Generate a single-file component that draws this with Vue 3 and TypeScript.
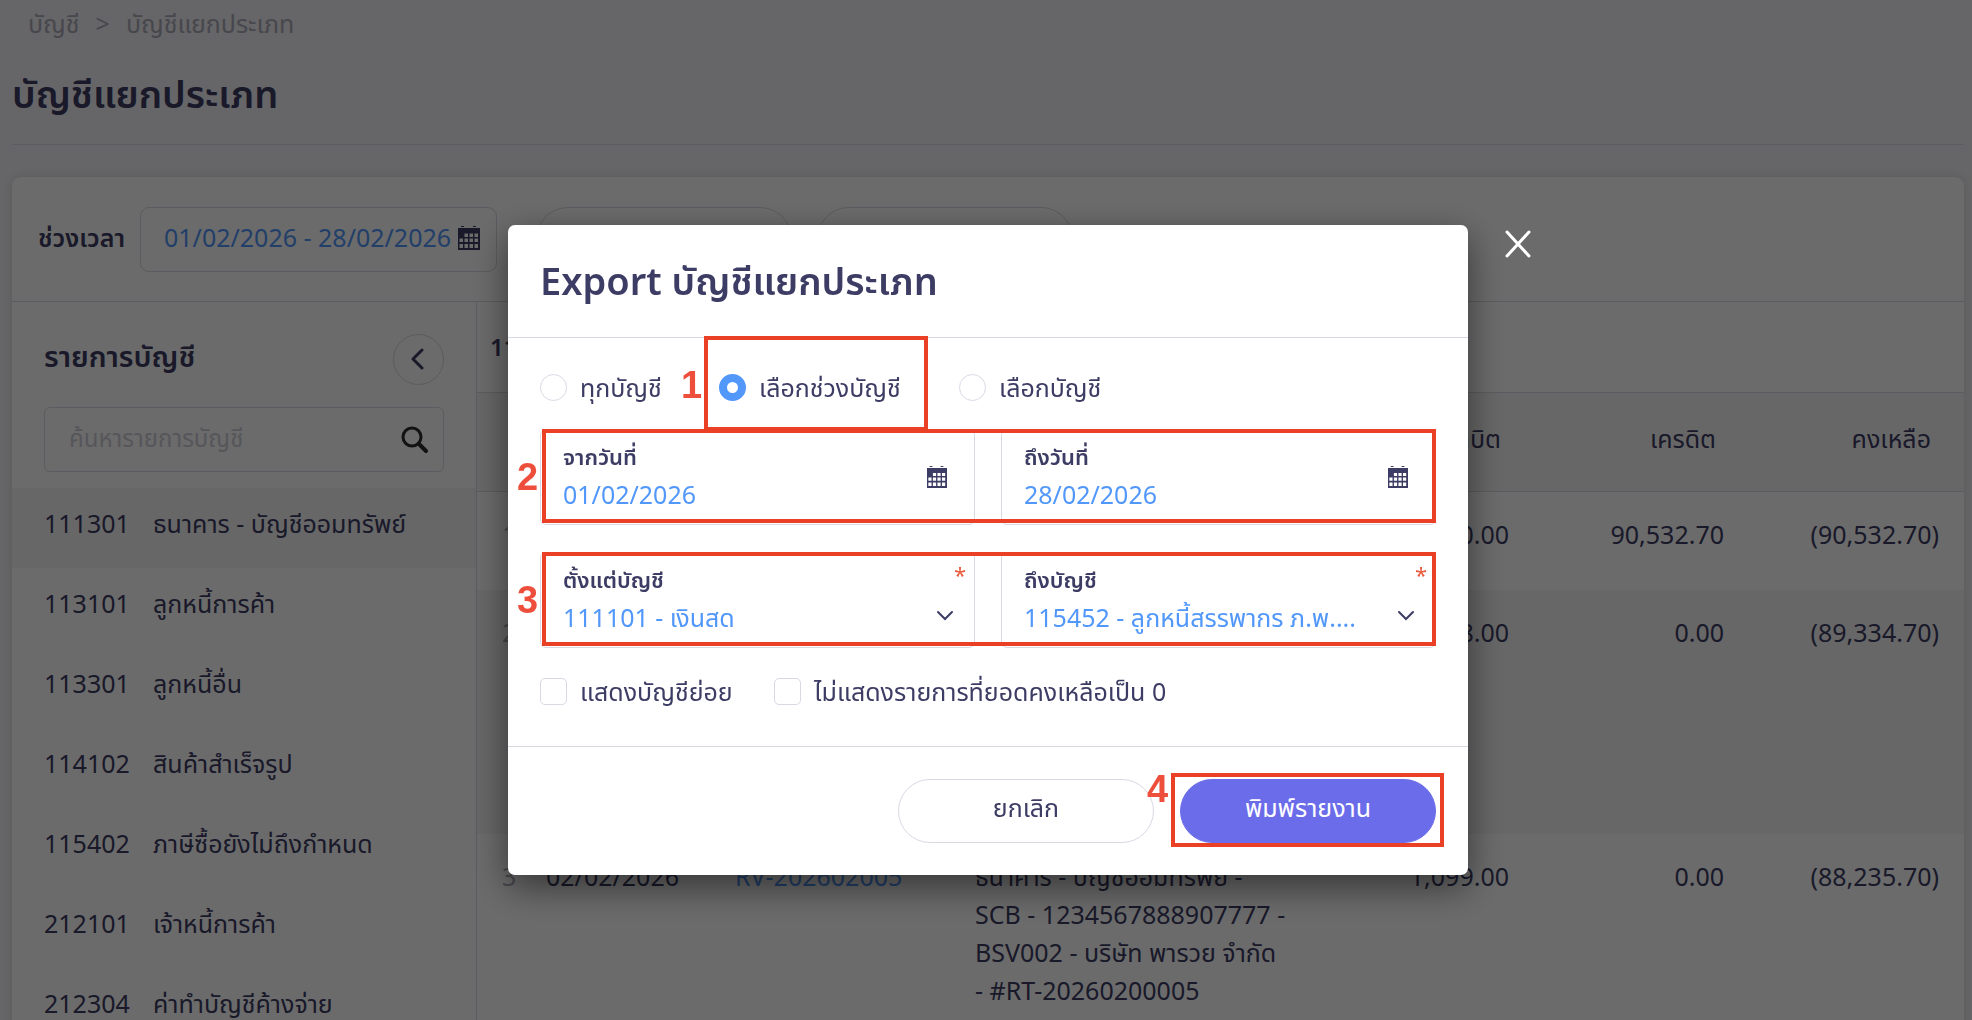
<script setup lang="ts">
import { ref } from 'vue'

interface Account { code: string; name: string }
interface Entry { no: string; date: string; doc: string; detail: string[]; debit: string; credit: string; balance: string }

const accounts: Account[] = [
  { code: '111301', name: 'ธนาคาร - บัญชีออมทรัพย์' },
  { code: '113101', name: 'ลูกหนี้การค้า' },
  { code: '113301', name: 'ลูกหนี้อื่น' },
  { code: '114102', name: 'สินค้าสำเร็จรูป' },
  { code: '115402', name: 'ภาษีซื้อยังไม่ถึงกำหนด' },
  { code: '212101', name: 'เจ้าหนี้การค้า' },
  { code: '212304', name: 'ค่าทำบัญชีค้างจ่าย' },
]

const entries: Entry[] = [
  { no: '1', date: '', doc: '', detail: [], debit: '0.00', credit: '90,532.70', balance: '(90,532.70)' },
  { no: '2', date: '', doc: '', detail: [], debit: '1,198.00', credit: '0.00', balance: '(89,334.70)' },
  {
    no: '3',
    date: '02/02/2026',
    doc: 'RV-202602005',
    detail: ['ธนาคาร - บัญชีออมทรัพย์ -', 'SCB - 1234567888907777 -', 'BSV002 - บริษัท พารวย จำกัด', '- #RT-20260200005'],
    debit: '1,099.00',
    credit: '0.00',
    balance: '(88,235.70)',
  },
]

const scope = ref('range')
const period = ref('01/02/2026 - 28/02/2026')
const dateFrom = ref('01/02/2026')
const dateTo = ref('28/02/2026')
const showSub = ref(false)
const hideZero = ref(false)
</script>

<template>
  <div class="page">
    <svg class="defs" aria-hidden="true">
      <symbol id="calendar" viewBox="0 0 22 24">
        <path fill="currentColor" fill-rule="evenodd" d="M3 0h3v1H3zM15 0h3v1h-3zM0 2h22v22H0zM6.5 7.5v3.5h3.5v-3.5zM11.5 7.5v3.5h3.5v-3.5zM16.5 7.5v3.5h3.5v-3.5zM1.5 12.5v3.5h3.5v-3.5zM6.5 12.5v3.5h3.5v-3.5zM11.5 12.5v3.5h3.5v-3.5zM16.5 12.5v3.5h3.5v-3.5zM1.5 18v4h3.5v-4zM6.5 18v4h3.5v-4zM11.5 18v4h3.5v-4zM16.5 18v4h3.5v-4z" />
      </symbol>
    </svg>

    <nav class="crumbs">
      <a href="#">บัญชี</a><span>&gt;</span><a href="#">บัญชีแยกประเภท</a>
    </nav>
    <h1 class="title">บัญชีแยกประเภท</h1>

    <section class="card">
      <div class="filters">
        <label class="strong" for="period">ช่วงเวลา</label>
        <div class="period">
          <input id="period" v-model="period" type="text" />
          <svg class="cal-lg"><use href="#calendar" /></svg>
        </div>
        <button class="pill" type="button" aria-label="Export"></button>
        <button class="pill" type="button" aria-label="Print"></button>
      </div>

      <div class="body">
        <aside class="side">
          <div class="side-head">
            <h2>รายการบัญชี</h2>
            <button class="collapse" type="button" aria-label="ย่อ">
              <svg width="18" height="22" viewBox="0 0 18 22"><path d="M12 2 3 11l9 9" fill="none" stroke="currentColor" stroke-width="3" stroke-linecap="round" stroke-linejoin="round" /></svg>
            </button>
          </div>
          <div class="search">
            <input type="text" placeholder="ค้นหารายการบัญชี" aria-label="ค้นหารายการบัญชี" />
            <svg width="26" height="26" viewBox="0 0 26 26"><circle cx="10" cy="10" r="9" /><path d="m17 17 7 7" stroke-width="4" stroke-linecap="round" /></svg>
          </div>
          <ul class="accounts">
            <li v-for="(a, i) in accounts" :key="a.code" :class="{ active: i === 0 }">
              <span class="code">{{ a.code }}</span><span>{{ a.name }}</span>
            </li>
          </ul>
        </aside>

        <main class="ledger">
          <h3>111301</h3>
          <table>
            <thead>
              <tr>
                <th class="c-no"></th><th class="c-date"></th><th class="c-doc"></th><th></th>
                <th class="c-debit num">เดบิต</th><th class="c-num num">เครดิต</th><th class="c-num num">คงเหลือ</th>
              </tr>
            </thead>
            <tbody>
              <tr v-for="e in entries" :key="e.no">
                <td class="no">{{ e.no }}</td>
                <td>{{ e.date }}</td>
                <td><a v-if="e.doc" href="#">{{ e.doc }}</a></td>
                <td><div v-for="line in e.detail" :key="line" class="line">{{ line }}</div></td>
                <td class="num">{{ e.debit }}</td>
                <td class="num">{{ e.credit }}</td>
                <td class="num">{{ e.balance }}</td>
              </tr>
            </tbody>
          </table>
        </main>
      </div>
    </section>

    <div class="overlay">
      <form class="modal" role="dialog" aria-labelledby="modal-title" @submit.prevent>
        <button class="close" type="button" aria-label="ปิด">
          <svg width="26" height="28" viewBox="0 0 26 28"><path d="m2 2 22 24M24 2 2 26" stroke="#fff" stroke-width="3" stroke-linecap="round" /></svg>
        </button>
        <header><h2 id="modal-title">Export บัญชีแยกประเภท</h2></header>

        <div class="content">
          <div class="radios">
            <label><input v-model="scope" type="radio" value="all" />ทุกบัญชี</label>
            <label class="marked">
              <input v-model="scope" type="radio" value="range" />เลือกช่วงบัญชี
              <span class="mark mark-range"><b>1</b></span>
            </label>
            <label><input v-model="scope" type="radio" value="pick" />เลือกบัญชี</label>
          </div>

          <div class="fields marked">
            <div class="field">
              <label for="from">จากวันที่</label>
              <input id="from" v-model="dateFrom" type="text" />
              <svg class="cal"><use href="#calendar" /></svg>
            </div>
            <div class="field">
              <label for="to">ถึงวันที่</label>
              <input id="to" v-model="dateTo" type="text" />
              <svg class="cal"><use href="#calendar" /></svg>
            </div>
            <span class="mark mark-row"><b>2</b></span>
          </div>

          <div class="fields marked">
            <div class="field">
              <label for="acc-from">ตั้งแต่บัญชี</label>
              <select id="acc-from"><option>111101 - เงินสด</option></select>
              <span class="req">*</span>
              <svg class="chev" viewBox="0 0 18 12"><path d="m2 2 7 7 7-7" /></svg>
            </div>
            <div class="field">
              <label for="acc-to">ถึงบัญชี</label>
              <select id="acc-to"><option>115452 - ลูกหนี้สรรพากร ภ.พ....</option></select>
              <span class="req">*</span>
              <svg class="chev" viewBox="0 0 18 12"><path d="m2 2 7 7 7-7" /></svg>
            </div>
            <span class="mark mark-row"><b>3</b></span>
          </div>

          <div class="checks">
            <label><input v-model="showSub" type="checkbox" />แสดงบัญชีย่อย</label>
            <label><input v-model="hideZero" type="checkbox" />ไม่แสดงรายการที่ยอดคงเหลือเป็น 0</label>
          </div>
        </div>

        <footer>
          <button class="btn" type="button">ยกเลิก</button>
          <div class="marked">
            <button class="btn primary" type="submit">พิมพ์รายงาน</button>
            <span class="mark mark-submit"><b>4</b></span>
          </div>
        </footer>
      </form>
    </div>
  </div>
</template>

<style>
html,
body {
  height: 100%;
  overflow: hidden;
}
</style>

<style scoped>
.page {
  height: 100vh;
  overflow: hidden;
  padding: 0 8px 0 12px;
  background: #f3f3f7;
  color: #3c3c64;
  font-family: 'Noto Sans', 'Noto Sans Thai', sans-serif;
  font-size: 25px;
  font-weight: 400;
  line-height: 38px;
}
.page, .page * { box-sizing: border-box; }
input, select, button { font: inherit; color: inherit; }
a { color: inherit; text-decoration: none; }
h1, h2, h3, ul { margin: 0; padding: 0; }
.defs { position: absolute; width: 0; height: 0; }

.crumbs { display: flex; gap: 16px; height: 43px; padding: 4px 16px 0; color: #aaaab8; }
.title {
  height: 102px;
  padding-top: 22px;
  border-bottom: 1px solid #d9d9e6;
  font-size: 38px;
  font-weight: 600;
  line-height: 56px;
}
.card {
  margin-top: 32px;
  background: #fff;
  border-radius: 9px 9px 0 0;
  box-shadow: 0 0 12px rgba(0, 0, 0, 0.12);
}
.filters {
  display: flex;
  align-items: center;
  height: 125px;
  padding: 0 26px;
  border-bottom: 1px solid #d9d9e6;
}
.strong { width: 102px; padding-bottom: 4px; font-weight: 600; }
.period {
  display: flex;
  align-items: center;
  width: 357px;
  height: 65px;
  margin-right: 39px;
  padding: 0 16px 2px 23px;
  border: 1px solid #d9d9e6;
  border-radius: 9px;
}
.period input {
  flex: 1;
  min-width: 0;
  padding: 0 0 2px;
  border: 0;
  background: none;
  color: #5297fa;
}
.cal-lg { width: 22px; height: 24px; }
.pill {
  width: 256px;
  height: 64px;
  margin-right: 25px;
  border: 1px solid #d9d9e6;
  border-radius: 32px;
  background: none;
}
.body { display: flex; }
.side { width: 465px; border-right: 1px solid #d9d9e6; }
.side-head {
  display: flex;
  align-items: center;
  justify-content: space-between;
  height: 105px;
  padding: 9px 32px 0;
}
.side-head h2 { padding-bottom: 6px; font-size: 29px; font-weight: 600; }
.collapse {
  display: grid;
  place-items: center;
  width: 51px;
  height: 51px;
  padding: 0;
  border: 1px solid #d9d9e6;
  border-radius: 50%;
  background: none;
}
.search {
  display: flex;
  align-items: center;
  height: 65px;
  margin: 0 32px 16px;
  padding: 0 15px 0 24px;
  border: 1px solid #d9d9e6;
  border-radius: 6px;
}
.search input { flex: 1; min-width: 0; padding: 0 0 4px; border: 0; background: none; font-size: 24px; }
.search input::placeholder { color: #ccccd8; opacity: 1; }
.search svg { fill: none; stroke: #2b2b2b; stroke-width: 3; overflow: visible; }
.accounts { list-style: none; }
.accounts li { display: flex; height: 80px; padding: 16px 32px 0; }
.accounts .active { background: #f5f5f5; }
.code { width: 109px; }

.ledger { flex: 1; min-width: 0; }
.ledger h3 { height: 91px; padding: 26px 13px 0; border-bottom: 1px solid #d9d9e6; font-size: 24px; font-weight: 600; }
table { width: 100%; border-collapse: separate; border-spacing: 0; table-layout: fixed; }
th { height: 99px; padding: 0 33px 8px; border-bottom: 1px solid #d9d9e6; background: #f5f5f5; font-weight: 400; }
td { padding: 23px 25px 26px 0; vertical-align: top; }
td:not(.num) { padding-right: 0; }
.c-no { width: 69px; padding: 0; }
.c-date { width: 189px; }
.c-doc { width: 240px; }
.c-debit { width: 248px; }
.c-num { width: 215px; }
.num { text-align: right; white-space: nowrap; }
td.no { padding-left: 25px; color: #aaaab8; }
td a { color: #5297fa; }
.line { white-space: nowrap; }
tbody tr { height: 98px; }
tbody tr:nth-child(2) { height: 244px; background: #f5f5f5; }

.overlay {
  position: fixed;
  inset: 0;
  padding: 225px 0 0 4px;
  background: rgba(0, 0, 0, 0.58);
}
.modal {
  position: relative;
  width: 960px;
  max-width: 90%;
  margin: 0 auto;
  background: #fff;
  border-radius: 7px;
  box-shadow: 0 12px 36px rgba(0, 0, 0, 0.5);
}
.close {
  position: absolute;
  top: 5px;
  right: -63px;
  padding: 0;
  border: 0;
  background: none;
  line-height: 0;
}
.modal header { padding: 27px 32px 29px; border-bottom: 1px solid #d9d9e6; }
.modal header h2 { font-size: 38px; font-weight: 600; line-height: 56px; }
.content { padding: 30px 32px 36px; }
.radios { display: flex; height: 61px; }
.radios label, .checks label { display: flex; align-items: center; gap: 13px; height: 38px; white-space: nowrap; }
.radios label:nth-child(1) { width: 179px; }
.radios label:nth-child(2) { width: 240px; }
.radios input, .checks input {
  flex: none;
  appearance: none;
  width: 27px;
  height: 27px;
  margin: 0;
  border: 1px solid #d9d9e6;
  border-radius: 50%;
  background: #fff;
}
.radios input:checked { border: 8px solid #5297fa; }
.checks { display: flex; gap: 42px; height: 38px; }
.checks label:nth-child(1) { width: 192px; }
.checks input { border-radius: 5px; }

.fields { display: grid; grid-template-columns: 1fr 1fr; gap: 26px; margin-bottom: 27px; }
.field {
  position: relative;
  height: 96px;
  padding: 9px 22px 0 22px;
  border: 1px solid #d9d9e6;
  border-radius: 6px;
}
.field label { display: block; height: 35px; font-size: 22px; font-weight: 600; line-height: 34px; }
.field input, .field select {
  display: block;
  width: 100%;
  height: 40px;
  padding: 0;
  border: 0;
  background: none;
  color: #5297fa;
  appearance: none;
}
.cal { position: absolute; top: 36px; right: 27px; width: 20px; height: 22px; }
.req { position: absolute; top: 2px; right: 8px; color: #ea5a3c; font-size: 22px; }
.chev { position: absolute; top: 57px; right: 20px; width: 18px; height: 12px; fill: none; stroke: #3c3c64; stroke-width: 2; stroke-linecap: round; }
.fields + .fields { margin-bottom: 24px; }

.modal footer {
  display: flex;
  justify-content: flex-end;
  gap: 26px;
  padding: 32px 32px;
  border-top: 1px solid #d9d9e6;
}
.btn {
  display: block;
  width: 256px;
  height: 64px;
  padding: 0 0 8px;
  border: 1px solid #d9d9e6;
  border-radius: 32px;
  background: #fff;
}
.primary { border-color: #6b6cea; background: #6b6cea; color: #fff; }

.marked { position: relative; }
.mark { position: absolute; border: 4px solid #ea4025; pointer-events: none; }
.mark b {
  position: absolute;
  color: #ee4f3c;
  font: 700 38px/38px 'Liberation Sans', sans-serif;
}
.mark-range { left: -15px; top: -32px; width: 224px; height: 95px; }
.mark-range b { left: -27px; top: 26px; }
.mark-row { left: 2px; right: 0; top: 0; height: 94px; }
.mark-row b { left: -29px; top: 25px; }
.mark-submit { inset: -6px -8px -4px -9px; }
.mark-submit b { left: -28px; top: -7px; }
</style>
